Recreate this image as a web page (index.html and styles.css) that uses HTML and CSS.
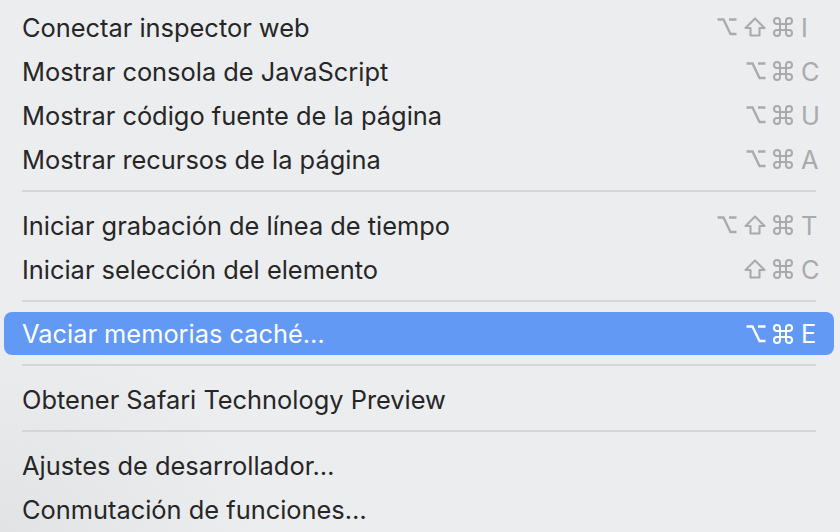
FILE: index.html
```html
<!DOCTYPE html>
<html lang="es">
<head>
  <meta charset="UTF-8" />
  <meta name="viewport" content="width=device-width, initial-scale=1.0"/>
  <title>Desarrollo</title>
  <link rel="stylesheet" href="styles.css">
</head>
<body>
  <svg width="0" height="0" class="defs">
    <defs>
      <symbol id="opt" viewBox="0 0 20 20">
        <path d="M0.5 2.5 H6.5 L13.5 17 H19.5 M12 2.5 H19.5" fill="none" stroke="currentColor" stroke-width="2.3"/>
      </symbol>
      <symbol id="shift" viewBox="0 0 22 20">
        <path d="M11 1.5 L20.5 11 H15.5 V18.5 H6.5 V11 H1.5 Z" fill="none" stroke="currentColor" stroke-width="2.1" stroke-linejoin="round"/>
      </symbol>
      <symbol id="cmd" viewBox="0 0 20 20">
        <path d="M7 7 V4 A3 3 0 1 0 4 7 H16 A3 3 0 1 0 13 4 V16 A3 3 0 1 0 16 13 H4 A3 3 0 1 0 7 16 Z" fill="none" stroke="currentColor" stroke-width="2"/>
      </symbol>
    </defs>
  </svg>

  <div class="menu">
    <div class="item">
      <span class="label">Conectar inspector web</span>
      <span class="keys"><svg class="mod"><use href="#opt"/></svg><svg class="mod wide"><use href="#shift"/></svg><svg class="mod"><use href="#cmd"/></svg><span class="key">I</span></span>
    </div>
    <div class="item">
      <span class="label">Mostrar consola de JavaScript</span>
      <span class="keys"><svg class="mod"><use href="#opt"/></svg><svg class="mod"><use href="#cmd"/></svg><span class="key">C</span></span>
    </div>
    <div class="item">
      <span class="label">Mostrar código fuente de la página</span>
      <span class="keys"><svg class="mod"><use href="#opt"/></svg><svg class="mod"><use href="#cmd"/></svg><span class="key">U</span></span>
    </div>
    <div class="item">
      <span class="label">Mostrar recursos de la página</span>
      <span class="keys"><svg class="mod"><use href="#opt"/></svg><svg class="mod"><use href="#cmd"/></svg><span class="key">A</span></span>
    </div>

    <div class="sep"></div>

    <div class="item">
      <span class="label">Iniciar grabación de línea de tiempo</span>
      <span class="keys"><svg class="mod"><use href="#opt"/></svg><svg class="mod wide"><use href="#shift"/></svg><svg class="mod"><use href="#cmd"/></svg><span class="key">T</span></span>
    </div>
    <div class="item">
      <span class="label">Iniciar selección del elemento</span>
      <span class="keys"><svg class="mod wide"><use href="#shift"/></svg><svg class="mod"><use href="#cmd"/></svg><span class="key">C</span></span>
    </div>

    <div class="sep"></div>

    <div class="item active">
      <span class="label">Vaciar memorias caché…</span>
      <span class="keys"><svg class="mod"><use href="#opt"/></svg><svg class="mod"><use href="#cmd"/></svg><span class="key">E</span></span>
    </div>

    <div class="sep"></div>

    <div class="item">
      <span class="label">Obtener Safari Technology Preview</span>
    </div>

    <div class="sep"></div>

    <div class="item">
      <span class="label">Ajustes de desarrollador…</span>
    </div>
    <div class="item">
      <span class="label">Conmutación de funciones…</span>
    </div>
  </div>
</body>
</html>
```

FILE: styles.css
```css
body {
  margin: 0;
  height: 532px;
  overflow: hidden;
  font-family: Inter, "Noto Sans", sans-serif;
  background: radial-gradient(ellipse 260px 200px at 0 100%, #e2e3e5 0%, #ecedef 100%);
  background-color: #ecedef;
}
.defs {
  position: absolute;
}
.menu {
  padding-top: 5px;
}
.item {
  display: flex;
  align-items: center;
  justify-content: space-between;
  height: 44px;
  margin: 0 6px 0 4px;
  padding: 0 13px 0 18px;
  border-radius: 8px;
  font-size: 25.4px;
  color: #262626;
}
.item.active {
  height: 43px;
  margin-top: -1px;
  margin-bottom: 1px;
  background: #6299f5;
  color: #fff;
}
.keys {
  display: flex;
  align-items: center;
  gap: 7px;
  color: #a9aaab;
}
.active .keys {
  color: #fff;
}
.mod {
  width: 20px;
  height: 20px;
}
.mod.wide {
  width: 22px;
}
.key {
  width: 20px;
  margin-left: 1px;
}
.sep {
  height: 2px;
  margin: 9px 24px 11px 22px;
  background: #d4d5d7;
}
```
